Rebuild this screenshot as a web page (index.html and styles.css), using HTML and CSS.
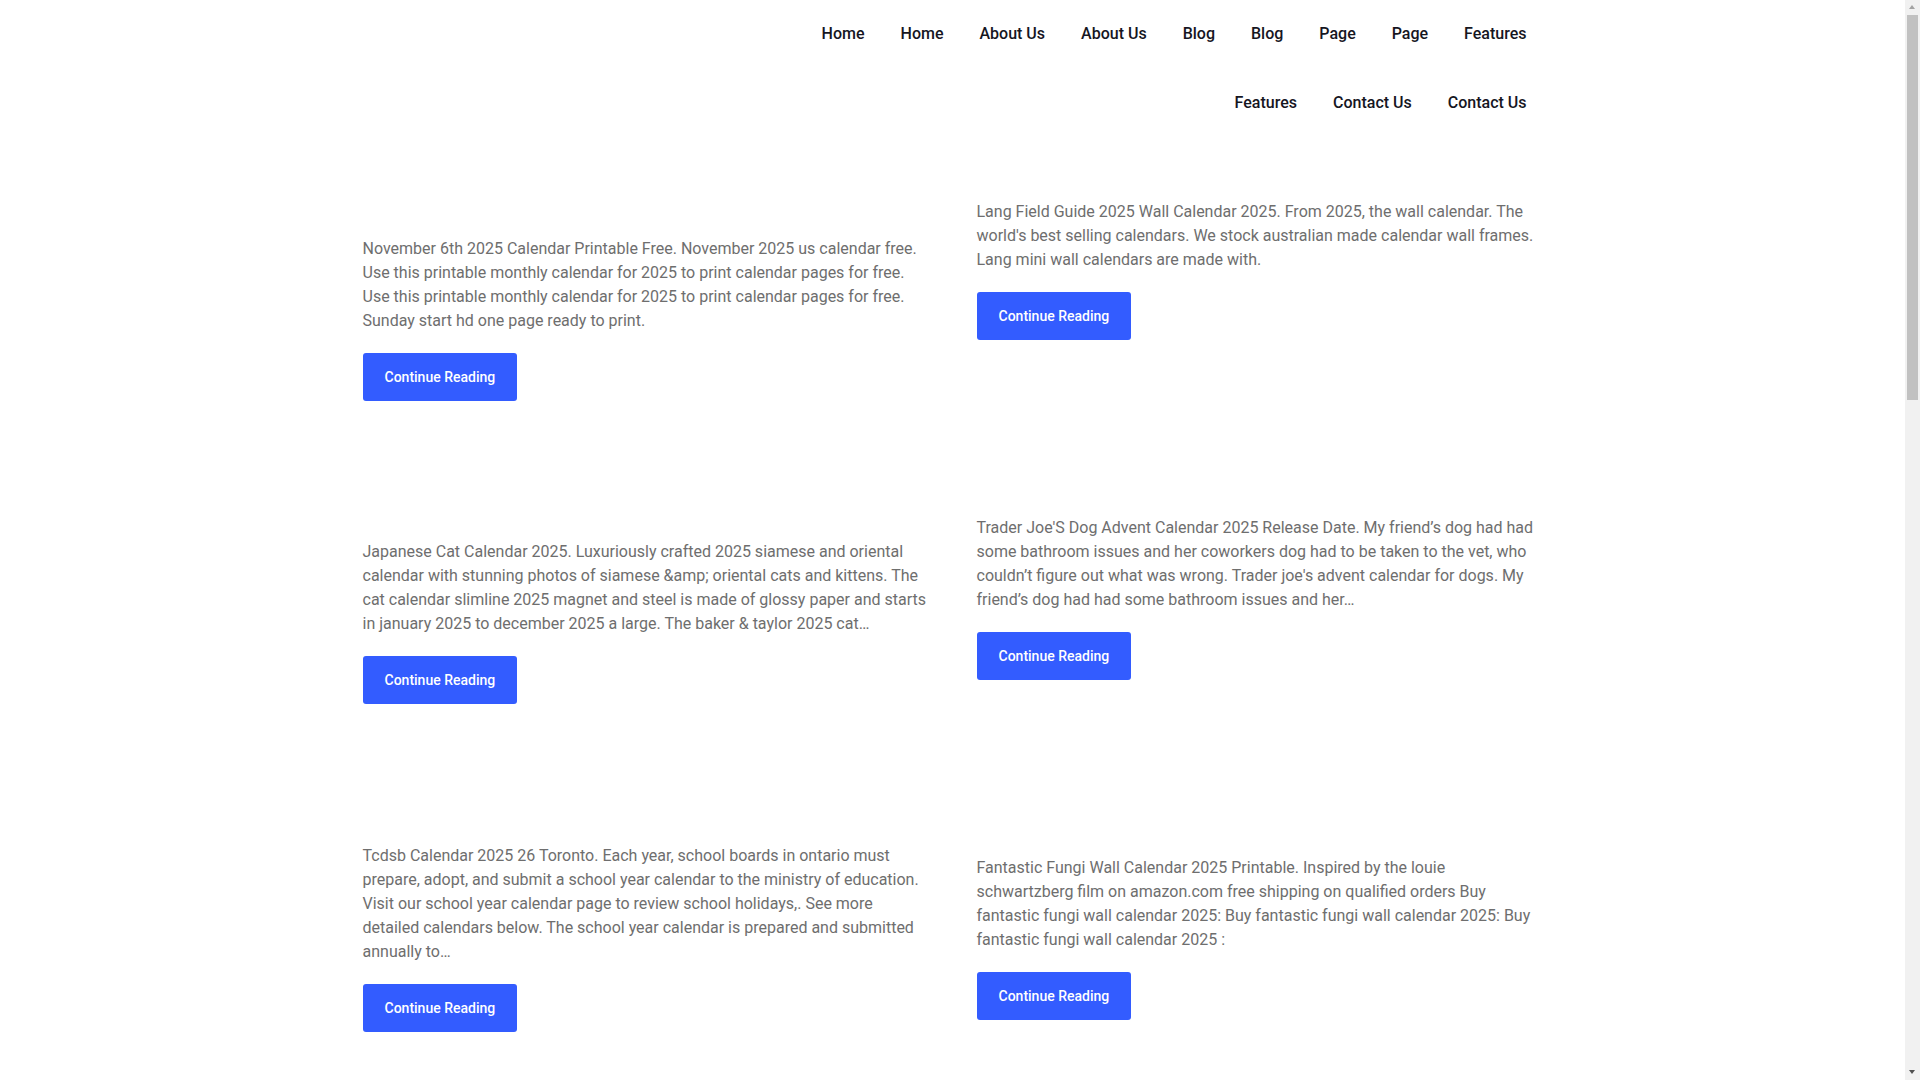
FILE: index.html
```html
<!DOCTYPE html>
<html lang="en">
<head>
<meta charset="utf-8">
<title>Calendar 2025</title>
<link rel="stylesheet" href="styles.css">
</head>
<body>
<header class="site-header">
  <div class="container header-inner">
    <div class="logo"></div>
    <nav class="main-nav">
      <ul class="menu">
        <li><a href="#">Home</a></li>
        <li><a href="#">Home</a></li>
        <li><a href="#">About Us</a></li>
        <li><a href="#">About Us</a></li>
        <li><a href="#">Blog</a></li>
        <li><a href="#">Blog</a></li>
        <li><a href="#">Page</a></li>
        <li><a href="#">Page</a></li>
        <li><a href="#">Features</a></li>
        <li><a href="#">Features</a></li>
        <li><a href="#">Contact Us</a></li>
        <li><a href="#">Contact Us</a></li>
      </ul>
    </nav>
  </div>
</header>
<main class="container site-main">
  <div class="posts">
    <article class="post">
      <div class="thumb thumb-99"></div>
      <p class="excerpt">November 6th 2025 Calendar Printable Free. November 2025 us calendar free. Use this printable monthly calendar for 2025 to print calendar pages for free. Use this printable monthly calendar for 2025 to print calendar pages for free. Sunday start hd one page ready to print.</p>
      <a class="btn" href="#">Continue Reading</a>
    </article>
    <article class="post">
      <div class="thumb thumb-62"></div>
      <p class="excerpt">Lang Field Guide 2025 Wall Calendar 2025. From 2025, the wall calendar. The world's best selling calendars. We stock australian made calendar wall frames. Lang mini wall calendars are made with.</p>
      <a class="btn" href="#">Continue Reading</a>
    </article>
    <article class="post">
      <div class="thumb thumb-99"></div>
      <p class="excerpt">Japanese Cat Calendar 2025. Luxuriously crafted 2025 siamese and oriental calendar with stunning photos of siamese &amp;amp; oriental cats and kittens. The cat calendar slimline 2025 magnet and steel is made of glossy paper and starts in january 2025 to december 2025 a large. The baker &amp; taylor 2025 cat…</p>
      <a class="btn" href="#">Continue Reading</a>
    </article>
    <article class="post">
      <div class="thumb thumb-75"></div>
      <p class="excerpt">Trader Joe'S Dog Advent Calendar 2025 Release Date. My friend’s dog had had some bathroom issues and her coworkers dog had to be taken to the vet, who couldn’t figure out what was wrong. Trader joe's advent calendar for dogs. My friend’s dog had had some bathroom issues and her…</p>
      <a class="btn" href="#">Continue Reading</a>
    </article>
    <article class="post">
      <div class="thumb thumb-100"></div>
      <p class="excerpt">Tcdsb Calendar 2025 26 Toronto. Each year, school boards in ontario must prepare, adopt, and submit a school year calendar to the ministry of education. Visit our school year calendar page to review school holidays,. See more detailed calendars below. The school year calendar is prepared and submitted annually to…</p>
      <a class="btn" href="#">Continue Reading</a>
    </article>
    <article class="post">
      <div class="thumb thumb-112"></div>
      <p class="excerpt">Fantastic Fungi Wall Calendar 2025 Printable. Inspired by the louie schwartzberg film on amazon.com free shipping on qualified orders Buy fantastic fungi wall calendar 2025: Buy fantastic fungi wall calendar 2025: Buy fantastic fungi wall calendar 2025 :</p>
      <a class="btn" href="#">Continue Reading</a>
    </article>
  </div>
</main>
<div class="scrollbar" aria-hidden="true">
  <span class="sb-arrow sb-up"></span>
  <span class="sb-thumb"></span>
  <span class="sb-arrow sb-down"></span>
</div>
</body>
</html>
```
FILE: styles.css
```css
html, body {
  margin: 0;
  padding: 0;
  background: #ffffff;
}

body {
  font-family: Roboto, "Liberation Sans", Arial, sans-serif;
  font-size: 16px;
  color: #6b6b6b;
  padding-right: 15px;
}

.container {
  width: 1200px;
  margin: 0 auto;
  padding: 0 10px;
  box-sizing: border-box;
}

.header-inner {
  display: flex;
  justify-content: space-between;
  align-items: flex-start;
}

.main-nav {
  width: 780px;
  margin-right: -2px;
}

.menu {
  list-style: none;
  margin: 0;
  padding: 0;
  display: flex;
  flex-wrap: wrap;
  justify-content: flex-end;
}

.menu a {
  display: block;
  padding: 24px 18px 26px;
  line-height: 19px;
  font-size: 16px;
  font-weight: 500;
  color: #16161f;
  text-decoration: none;
}

.site-main {
  min-height: 2800px;
}

.posts {
  display: grid;
  grid-template-columns: 1fr 1fr;
  column-gap: 48px;
  row-gap: 40px;
  align-items: start;
}

.thumb {
  height: 99px;
}
.thumb-62 { height: 62px; }
.thumb-75 { height: 75px; }
.thumb-99 { height: 99px; }
.thumb-100 { height: 100px; }
.thumb-112 { height: 112px; }

.excerpt {
  margin: 0 0 20px;
  line-height: 24px;
  font-size: 16px;
  color: #6e6e6e;
}

.btn {
  display: inline-block;
  padding: 0 22px;
  height: 48px;
  line-height: 48px;
  background: #335cff;
  color: #ffffff;
  border-radius: 3px;
  font-size: 14px;
  font-weight: 500;
  text-decoration: none;
}

/* imitation of the browser's classic scrollbar */
.scrollbar {
  position: fixed;
  top: 0;
  right: 0;
  width: 15px;
  height: 100vh;
  background: #f1f1f1;
}

.sb-thumb {
  position: absolute;
  top: 15px;
  left: 2px;
  width: 11px;
  height: 385px;
  background: #c1c1c1;
}

.sb-arrow {
  position: absolute;
  left: 4px;
  width: 0;
  height: 0;
  border-left: 3.5px solid transparent;
  border-right: 3.5px solid transparent;
}

.sb-up {
  top: 5px;
  border-bottom: 4px solid #a3a3a3;
}

.sb-down {
  bottom: 6px;
  border-top: 4px solid #505050;
}
```
